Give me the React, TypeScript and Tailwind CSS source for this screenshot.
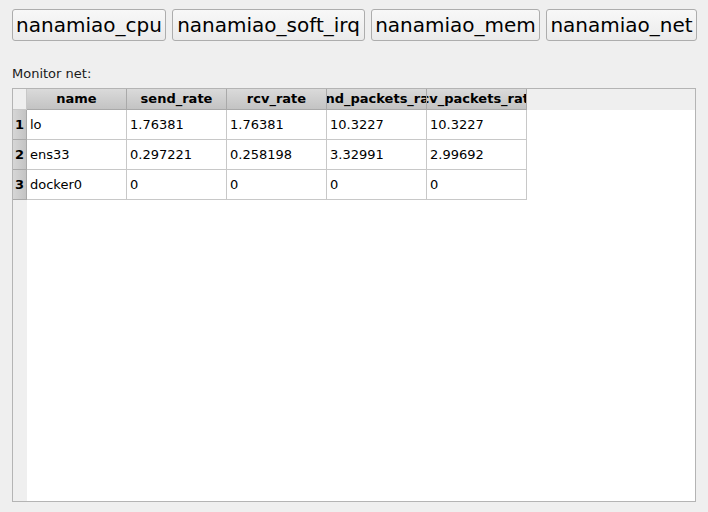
const tabs = [
  { label: 'nanamiao_cpu', w: 'w-[154px]' },
  { label: 'nanamiao_soft_irq', w: 'w-[193px]' },
  { label: 'nanamiao_mem', w: 'w-[169px]' },
  { label: 'nanamiao_net', w: 'w-[151px]' },
];

const columns = ['name', 'send_rate', 'rcv_rate', 'send_packets_rate', 'rcv_packets_rate'];

const rows = [
  ['lo', '1.76381', '1.76381', '10.3227', '10.3227'],
  ['ens33', '0.297221', '0.258198', '3.32991', '2.99692'],
  ['docker0', '0', '0', '0', '0'],
];

export default function App() {
  return (
    <div
      className="w-[708px] h-[512px] bg-[#efefef] flex flex-col text-black"
      style={{ fontFamily: '"DejaVu Sans", "Liberation Sans", sans-serif' }}
    >
      <div className="flex gap-[6px] pl-[12px] pt-[9px]">
        {tabs.map((t) => (
          <button
            key={t.label}
            className={`${t.w} h-[32px] rounded-[3px] border border-[#adadad] bg-gradient-to-b from-[#f8f8f8] to-[#ebebeb] text-[20px] leading-none flex items-center justify-center`}
          >
            {t.label}
          </button>
        ))}
      </div>

      <div className="pl-[12px] pt-[25px] text-[13px] leading-[16px] text-[#1a1a1a]">Monitor net:</div>

      <div className="mx-[12px] mt-[6px] h-[414px] border border-[#b4b4b4] flex flex-col bg-white">
        {/* header row */}
        <div className="flex h-[21px] bg-[#efefef]">
          <div className="w-[14px] border-r border-b border-[#c8c8c8] bg-[#efefef]" />
          {columns.map((c) => (
            <div
              key={c}
              className="w-[100px] overflow-hidden flex justify-center items-center whitespace-nowrap border-r border-b border-[#a9a9a9] bg-gradient-to-b from-[#dadada] to-[#c3c3c3] text-[13px] font-bold"
            >
              {c}
            </div>
          ))}
          <div className="flex-1" />
        </div>
        {rows.map((r, i) => (
          <div key={i} className="flex h-[30px]">
            <div className="w-[14px] border-r border-b border-[#a9a9a9] bg-gradient-to-r from-[#d6d6d6] to-[#c4c4c4] flex items-center justify-center text-[13px] font-bold">
              {i + 1}
            </div>
            {r.map((v, j) => (
              <div
                key={j}
                className="w-[100px] border-r border-b border-[#c8c8c8] flex items-center pl-[3px] text-[13px] whitespace-nowrap overflow-hidden"
              >
                {v}
              </div>
            ))}
            <div className="flex-1" />
          </div>
        ))}
        <div className="flex-1 flex">
          <div className="w-[14px] bg-[#efefef]" />
          <div className="flex-1 bg-white" />
        </div>
      </div>
    </div>
  );
}
